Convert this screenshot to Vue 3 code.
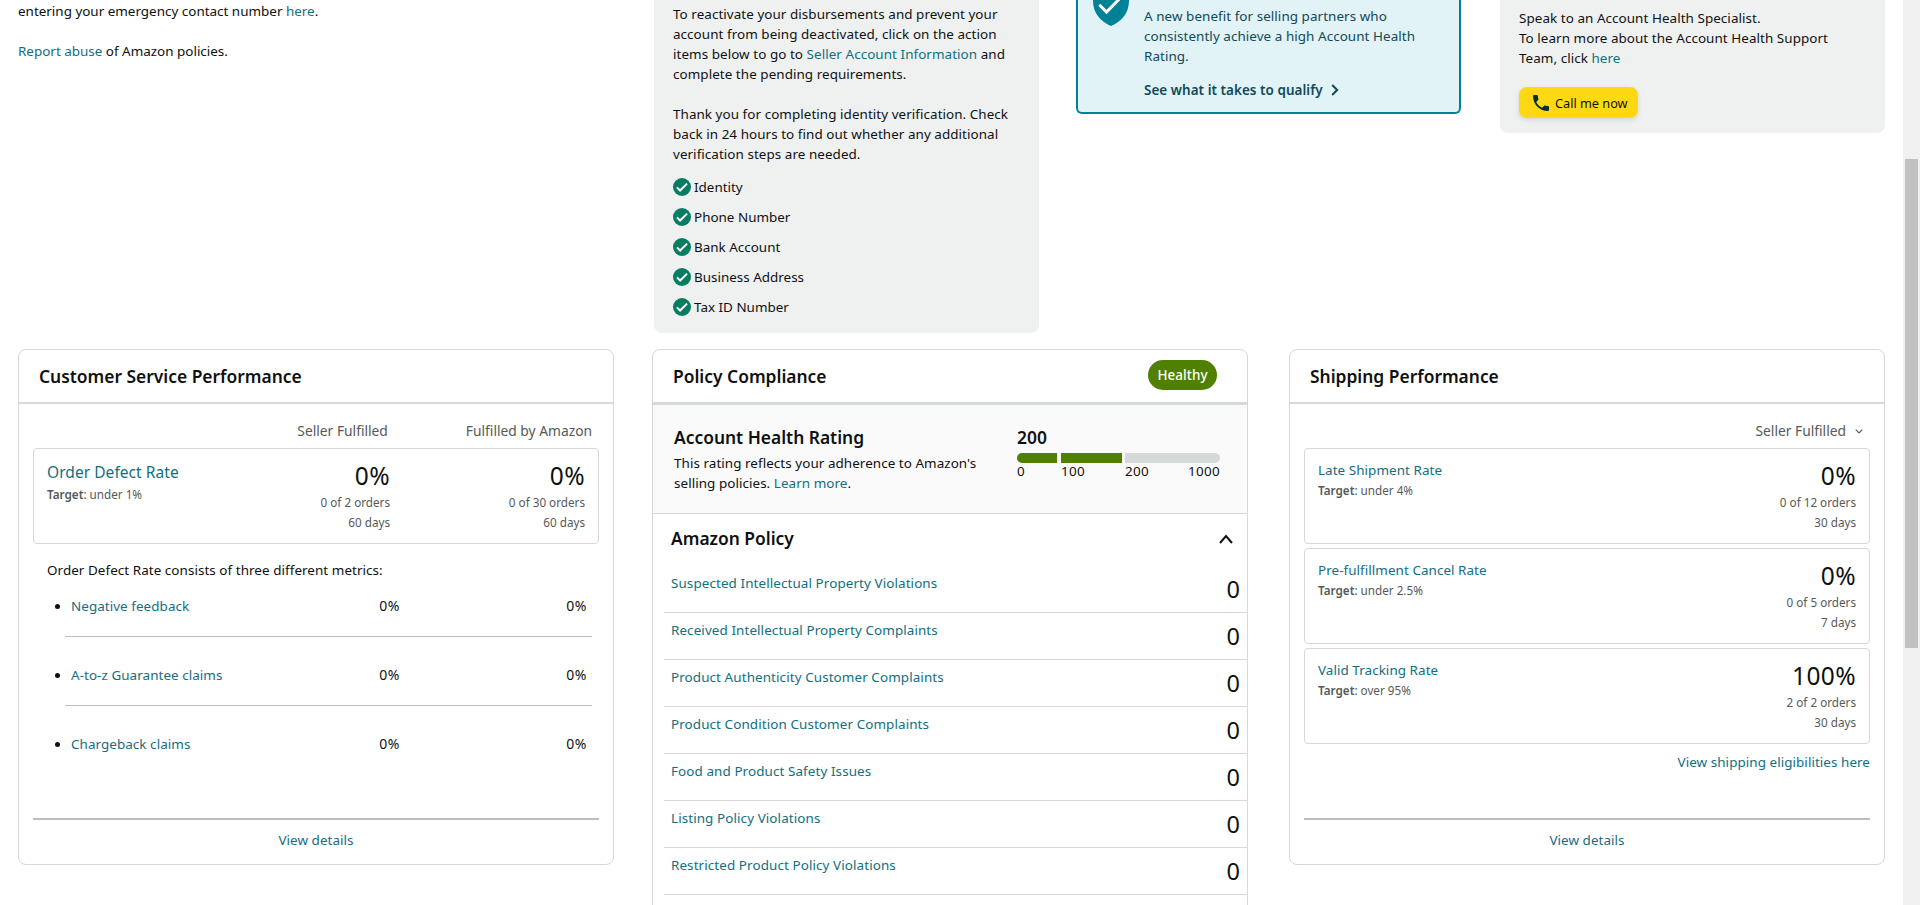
<script setup>
const checks = ['Identity', 'Phone Number', 'Bank Account', 'Business Address', 'Tax ID Number']
const metrics = ['Negative feedback', 'A-to-z Guarantee claims', 'Chargeback claims']
const policies = [
  'Suspected Intellectual Property Violations',
  'Received Intellectual Property Complaints',
  'Product Authenticity Customer Complaints',
  'Product Condition Customer Complaints',
  'Food and Product Safety Issues',
  'Listing Policy Violations',
  'Restricted Product Policy Violations',
]
const shipping = [
  { name: 'Late Shipment Rate', target: 'under 4%', rate: '0%', orders: '0 of 12 orders', days: '30 days' },
  { name: 'Pre-fulfillment Cancel Rate', target: 'under 2.5%', rate: '0%', orders: '0 of 5 orders', days: '7 days' },
  { name: 'Valid Tracking Rate', target: 'over 95%', rate: '100%', orders: '2 of 2 orders', days: '30 days' },
]
</script>

<template>
  <div class="page">
    <main class="content">
      <section class="top">
        <div class="intro">
          <p>entering your emergency contact number <a>here</a>.</p>
          <p><a>Report abuse</a> of Amazon policies.</p>
        </div>
        <div class="panel verify">
          <p>To reactivate your disbursements and prevent your<br />account from being deactivated, click on the action<br />items below to go to <a>Seller Account Information</a> and<br />complete the pending requirements.</p>
          <p>Thank you for completing identity verification. Check<br />back in 24 hours to find out whether any additional<br />verification steps are needed.</p>
          <ul class="checks">
            <li v-for="c in checks" :key="c">
              <svg width="18" height="18" viewBox="0 0 18 18"><circle cx="9" cy="9" r="9" fill="#067d62" /><path d="M3.9 9.4l3.2 3.1 7-6.9" fill="none" stroke="#fff" stroke-width="2" /></svg>
              <span>{{ c }}</span>
            </li>
          </ul>
        </div>
        <div class="benefit">
          <svg class="shield" width="36" height="46" viewBox="0 0 36 46"><path d="M18 0L36 7v14c0 12-8 21-18 25C8 42 0 33 0 21V7z" fill="#008296" /><path d="M6.3 24.7l7.2 7.3L27 18.2" fill="none" stroke="#fff" stroke-width="3" /></svg>
          <div class="benefit-text">
            <p>A new benefit for selling partners who<br />consistently achieve a high Account Health<br />Rating.</p>
            <p class="qualify"><b>See what it takes to qualify</b><svg width="8" height="12" viewBox="0 0 8 12"><path d="M1.2 1l5 5-5 5" fill="none" stroke="#0f4a56" stroke-width="2" /></svg></p>
          </div>
        </div>
        <div class="panel support">
          <p>Speak to an Account Health Specialist.<br />To learn more about the Account Health Support<br />Team, click <a>here</a></p>
          <button class="call">
            <svg width="16" height="16" viewBox="3 3 18 18"><path d="M6.62 10.79c1.44 2.83 3.76 5.14 6.59 6.59l2.2-2.2c.27-.27.67-.36 1.02-.24 1.12.37 2.33.57 3.57.57.55 0 1 .45 1 1V20c0 .55-.45 1-1 1-9.39 0-17-7.61-17-17 0-.55.45-1 1-1h3.5c.55 0 1 .45 1 1 0 1.25.2 2.45.57 3.57.11.35.03.74-.25 1.02l-2.2 2.2z" fill="#002f36" /></svg>
            <span>Call me now</span>
          </button>
        </div>
      </section>

      <section class="cards">
        <article class="card">
          <header><h2>Customer Service Performance</h2></header>
          <div class="body">
            <div class="cols"><span>Seller Fulfilled</span><span class="fba">Fulfilled by Amazon</span></div>
            <div class="rate-box odr">
              <div class="name"><a>Order Defect Rate</a><p><b>Target</b>: under 1%</p></div>
              <div class="value"><strong>0%</strong><span>0 of 2 orders</span><span>60 days</span></div>
              <div class="value wide"><strong>0%</strong><span>0 of 30 orders</span><span>60 days</span></div>
            </div>
            <p class="consists">Order Defect Rate consists of three different metrics:</p>
            <ul class="metrics">
              <li v-for="m in metrics" :key="m"><i class="dot"></i><a>{{ m }}</a><span>0%</span><span class="far">0%</span></li>
            </ul>
            <footer><a>View details</a></footer>
          </div>
        </article>

        <article class="card tall">
          <header><h2>Policy Compliance</h2><span class="pill">Healthy</span></header>
          <div class="rating">
            <div class="rating-text">
              <h2>Account Health Rating</h2>
              <p>This rating reflects your adherence to Amazon's<br />selling policies. <a>Learn more</a>.</p>
            </div>
            <div class="gauge">
              <h2>200</h2>
              <div class="bar"><i></i><i></i><i></i></div>
              <div class="scale"><span>0</span><span>100</span><span>200</span><span>1000</span></div>
            </div>
          </div>
          <div class="policy-head"><h2>Amazon Policy</h2>
            <svg width="14" height="10" viewBox="0 0 14 10"><path d="M1 9l6-7 6 7" fill="none" stroke="#0f1111" stroke-width="2" /></svg>
          </div>
          <ul class="policies">
            <li v-for="p in policies" :key="p"><a>{{ p }}</a><strong>0</strong></li>
          </ul>
        </article>

        <article class="card">
          <header><h2>Shipping Performance</h2></header>
          <div class="body">
            <div class="cols select"><span>Seller Fulfilled</span><svg width="8" height="5" viewBox="0 0 8 5"><path d="M.7.7L4 4 7.3.7" fill="none" stroke="#565959" stroke-width="1.1" /></svg></div>
            <div class="rate-list">
              <div v-for="s in shipping" :key="s.name" class="rate-box">
                <div class="name"><a>{{ s.name }}</a><p><b>Target</b>: {{ s.target }}</p></div>
                <div class="value"><strong>{{ s.rate }}</strong><span>{{ s.orders }}</span><span>{{ s.days }}</span></div>
              </div>
            </div>
            <a class="eligibility">View shipping eligibilities here</a>
            <footer><a>View details</a></footer>
          </div>
        </article>
      </section>
    </main>
    <div class="scrollbar"><div class="thumb"></div></div>
  </div>
</template>

<style>
html, body { margin: 0; background: #fff; overflow: hidden; }
</style>

<style scoped>
* { box-sizing: border-box; }
.page {
  display: flex;
  width: 1920px;
  height: 905px;
  overflow: hidden;
  font: 13.45px/20px "Noto Sans", "Open Sans", sans-serif;
  letter-spacing: .055px;
  color: #0f1111;
}
p, h2, ul { margin: 0; padding: 0; list-style: none; }
svg { display: block; flex: none; }
a { color: #126f7f; white-space: nowrap; }
p, span, h2 { white-space: nowrap; }
h2 { font-size: 17.4px; line-height: 22px; padding-bottom: 2px; font-weight: 600; letter-spacing: 0; }
b { font-weight: 600; }
.content { width: 1903px; padding-left: 18px; }
.top { display: grid; grid-template-columns: 636px 422px 424px 385px; height: 349px; align-items: start; }
.intro { padding-top: 1px; display: flex; flex-direction: column; gap: 20px; letter-spacing: 0; }
.panel { width: 385px; padding: 0 19px; background: #eff1f1; border-radius: 0 0 8px 8px; }
.verify { height: 333px; padding-top: 4px; }
.verify p + p { margin-top: 20px; }
.checks { margin-top: 14px; display: grid; gap: 12px; letter-spacing: 0; }
.checks li { display: flex; align-items: center; gap: 3px; height: 18px; }
.benefit { display: flex; width: 385px; height: 114px; padding: 0 15px; gap: 15px; background: #e2f3f8; border: 2px solid #008296; border-top: 0; border-radius: 0 0 6px 6px; color: #0f4a56; }
.shield { margin-top: -20px; }
.benefit-text { padding-top: 6px; }
.qualify { display: flex; align-items: center; gap: 8px; margin-top: 14px; }
.support { height: 133px; padding-top: 8px; }
.call { display: flex; align-items: center; width: 119px; height: 31px; margin-top: 19px; padding: 0 0 0 14px; gap: 6px; border: 0; border-radius: 8px; background: #ffd814; box-shadow: 0 2px 5px rgba(15, 17, 17, .12); font: inherit; font-size: 12.7px; color: #0f1111; }
.cards { display: grid; grid-template-columns: 634px 637px 596px; align-items: start; }
.card { width: 596px; height: 516px; border: 1px solid #d5d9d9; border-radius: 8px; background: #fff; }
.tall { height: 600px; }
header { display: flex; align-items: center; justify-content: space-between; height: 54px; padding: 2px 0 0 20px; border-bottom: 2px solid #d5d9d9; }
.tall header { height: 55px; border-bottom-width: 3px; padding: 0 30px 0 20px; }
.tall header h2 { padding-top: 2px; }
.pill { width: 69px; height: 30px; margin-bottom: 2px; border-radius: 15px; background: #508000; color: #fff; line-height: 30px; text-align: center; font-weight: 500; }
.body { display: flex; flex-direction: column; height: 460px; padding: 17px 14px 0; }
.cols { display: flex; justify-content: flex-end; height: 20px; margin-bottom: 7px; padding-right: 7px; gap: 78px; color: #565959; font-size: 13.8px; letter-spacing: 0; }
.select { align-items: center; gap: 9px; }
.rate-box { display: flex; flex: none; height: 96px; padding: 0 13px; border: 1px solid #d5d9d9; border-radius: 4px; }
.rate-list { display: grid; gap: 4px; }
.name { flex: 1; padding-top: 11px; }
.name p { font-size: 11.7px; color: #565959; letter-spacing: 0; }
.odr .name a { font-size: 15.5px; }
.odr .name { padding-top: 13px; }
.odr .name p { margin-top: 1px; }
.value { display: flex; flex-direction: column; text-align: right; padding-top: 14px; color: #565959; font-size: 11.7px; letter-spacing: 0; }
.value.wide { width: 195px; }
strong { font-weight: 400; color: #0f1111; font-size: 23.5px; line-height: 26px; }
.value strong { margin-bottom: 3px; font-size: 24.5px; letter-spacing: .4px; }
.consists { margin: 16px 0 0 14px; }
.metrics { margin: 16px 7px 0 22px; }
.metrics li { display: flex; align-items: center; height: 69px; padding-bottom: 49px; }
.metrics li:not(:last-child) { background: linear-gradient(#bbbfbf, #bbbfbf) 10px 40px / 527px 1px no-repeat; }
.dot { width: 5px; height: 5px; border-radius: 50%; background: #0f1111; margin-right: 11px; }
.metrics a { width: 258px; }
.metrics span { width: 71px; text-align: right; font-size: 14px; letter-spacing: .5px; }
.metrics .far { width: 187px; }
footer { margin-top: auto; height: 46px; padding-top: 10px; border-top: 2px solid #bbbfbf; text-align: center; }
.eligibility { margin-top: 8px; text-align: right; }
.rating { display: flex; height: 109px; padding: 21px 0 0 21px; background: #fafafa; border-bottom: 1px solid #d5d9d9; }
.rating-text { width: 343px; }
.rating-text p { margin-top: 3px; }
.gauge { width: 203px; }
.bar { display: flex; margin-top: 3px; }
.bar i { height: 10px; background: #508000; }
.bar i:nth-child(1) { width: 40px; margin-right: 4px; border-radius: 5px 0 0 5px; }
.bar i:nth-child(2) { width: 61px; margin-right: 3px; }
.bar i:nth-child(3) { width: 95px; background: #d5d9d9; border-radius: 0 5px 5px 0; }
.scale { display: grid; grid-template-columns: 44px 64px 31px 64px; line-height: 17px; letter-spacing: .3px; }
.scale span:last-child { text-align: right; }
.policy-head { display: flex; align-items: center; justify-content: space-between; height: 52px; padding: 0 14px 2px 18px; }
.policies { padding-left: 11px; letter-spacing: .09px; }
.policies li { display: flex; justify-content: space-between; height: 47px; padding: 7px 7px 0 7px; border-bottom: 1px solid #d5d9d9; }
.policies strong { padding-top: 3px; }
.scrollbar { width: 17px; height: 905px; padding: 159px 2px 0; background: #f0f0f0; }
.thumb { height: 489px; background: #c1c1c1; }
</style>
